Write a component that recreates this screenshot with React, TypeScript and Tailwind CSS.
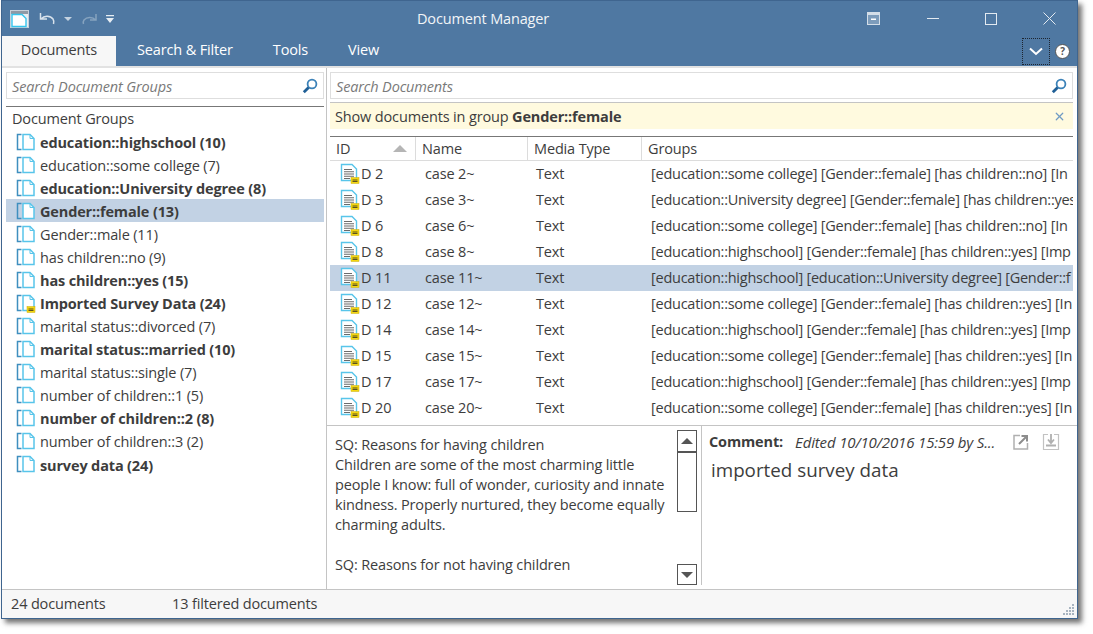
import * as React from 'react';
import { X } from 'lucide-react';

const groups = [
  { label: 'education::highschool (10)', bold: true },
  { label: 'education::some college (7)' },
  { label: 'education::University degree (8)', bold: true },
  { label: 'Gender::female (13)', bold: true, selected: true },
  { label: 'Gender::male (11)' },
  { label: 'has children::no (9)' },
  { label: 'has children::yes (15)', bold: true },
  { label: 'Imported Survey Data (24)', bold: true, commented: true },
  { label: 'marital status::divorced (7)' },
  { label: 'marital status::married (10)', bold: true },
  { label: 'marital status::single (7)' },
  { label: 'number of children::1 (5)' },
  { label: 'number of children::2 (8)', bold: true },
  { label: 'number of children::3 (2)' },
  { label: 'survey data (24)', bold: true },
];

const docs = [
  { id: 'D 2', name: 'case 2~', groups: '[education::some college] [Gender::female] [has children::no] [In' },
  { id: 'D 3', name: 'case 3~', groups: '[education::University degree] [Gender::female] [has children::yes' },
  { id: 'D 6', name: 'case 6~', groups: '[education::some college] [Gender::female] [has children::no] [In' },
  { id: 'D 8', name: 'case 8~', groups: '[education::highschool] [Gender::female] [has children::yes] [Imp' },
  { id: 'D 11', name: 'case 11~', groups: '[education::highschool] [education::University degree] [Gender::f', selected: true },
  { id: 'D 12', name: 'case 12~', groups: '[education::some college] [Gender::female] [has children::yes] [In' },
  { id: 'D 14', name: 'case 14~', groups: '[education::highschool] [Gender::female] [has children::yes] [Imp' },
  { id: 'D 15', name: 'case 15~', groups: '[education::some college] [Gender::female] [has children::yes] [In' },
  { id: 'D 17', name: 'case 17~', groups: '[education::highschool] [Gender::female] [has children::yes] [Imp' },
  { id: 'D 20', name: 'case 20~', groups: '[education::some college] [Gender::female] [has children::yes] [In' },
];

function Note({ x, y }: { x: number; y: number }) {
  return (
    <g>
      <rect x={x} y={y} width="8" height="6" fill="#f5d80f" stroke="#c9ad10" strokeWidth="0.5" />
      <path d={`M${x + 1.5} ${y + 2.5}h5M${x + 1.5} ${y + 4}h5`} stroke="#4a4320" strokeWidth="0.9" />
    </g>
  );
}

function GroupIcon({ commented }: { commented?: boolean }) {
  return (
    <svg width="20" height="20" viewBox="0 0 20 20" className="shrink-0" fill="none">
      <path d="M5.5 2.5H1.5V17.5H5.5" stroke="#3f8fbf" strokeWidth="1.5" />
      <path d="M7 2.5H14L18 6.5V17.5H7Z" fill="#fff" stroke="#58c5ea" strokeWidth="1.5" />
      <path d="M14 2.5V6.5H18" stroke="#58c5ea" strokeWidth="1" />
      {commented && <Note x={11} y={13.5} />}
    </svg>
  );
}

function DocIcon() {
  return (
    <svg width="20" height="22" viewBox="0 0 20 22" className="shrink-0" fill="none">
      <path d="M1.5 1.5H12L16.5 6V17.5H1.5Z" fill="#fff" stroke="#58c5ea" strokeWidth="1.4" />
      <path d="M4 6.5H12M4 8.8H14M4 11H14M4 13.3H14M4 15.5H10" stroke="#6b6b6b" strokeWidth="1.1" />
      <Note x={11} y={14.5} />
    </svg>
  );
}

function SearchIcon() {
  return (
    <svg width="16" height="16" viewBox="0 0 16 16" fill="none">
      <circle cx="10" cy="6" r="4.4" stroke="#3c82b8" strokeWidth="1.8" />
      <path d="M6.6 9.4L1.8 14.2" stroke="#1f5f96" strokeWidth="2.8" />
    </svg>
  );
}

function SearchBox({ placeholder, className }: { placeholder: string; className: string }) {
  return (
    <div className={`flex h-[27px] items-center justify-between border border-[#dedede] bg-white pl-[5px] pr-[5px] ${className}`}>
      <span className="pt-[2px] italic text-[#7a7a7a]">{placeholder}</span>
      <SearchIcon />
    </div>
  );
}

export default function App() {
  return (
    <div className="h-screen w-screen overflow-hidden bg-white pb-[15px] pl-px pr-[15px] font-['Open_Sans',sans-serif] text-[14.5px] tracking-[-0.15px] text-[#3d3d3d]">
      <div className="flex h-full flex-col border border-[#3f658f] bg-white shadow-[4px_4px_5px_rgba(70,70,70,0.75)]">
        {/* Title bar */}
        <header className="relative flex h-[35px] shrink-0 items-center bg-[#4f78a2] text-white">
          <div className="flex items-center pl-[8px]">
            <svg width="19" height="18" viewBox="0 0 19 18" fill="none">
              <rect x="0.5" y="0.5" width="18" height="17" fill="#e9eef3" stroke="#c6d0da" />
              <rect x="1" y="1" width="17" height="3" fill="#8f99a5" />
              <path d="M2 4.5H12L16 8.5V16.5H2Z" fill="#fff" stroke="#35c5ee" strokeWidth="1.4" />
            </svg>
            <svg width="18" height="16" viewBox="0 0 18 16" fill="none" className="ml-[10px]">
              <path d="M1.5 2V8H8M2 8C5 4.5 11 4 14 8C14.8 9.2 15 11 14.5 13" stroke="#d8e2ec" strokeWidth="1.5" />
            </svg>
            <svg width="8" height="5" viewBox="0 0 8 5" className="ml-[7px] mt-[2px]"><path d="M0 0H8L4 4Z" fill="#c4d2e0" /></svg>
            <svg width="18" height="16" viewBox="0 0 18 16" fill="none" className="ml-[8px]">
              <path d="M16 3V9H10M15.5 9C13 6 7 5.500 4 9C3.200 10.200 3 11.500 3.500 13" stroke="#86a3bf" strokeWidth="1.5" />
            </svg>
            <svg width="10" height="10" viewBox="0 0 10 10" className="ml-[7px]"><path d="M1 1H9V2.200H1ZM1 4H9L5 9Z" fill="#e6edf3" /></svg>
          </div>
          <span className="absolute left-[415px] text-[#f2f5f8]">Document Manager</span>
          <div className="ml-auto flex items-center">
            <svg width="13" height="13" viewBox="0 0 13 13" className="mr-[47px]">
              <rect width="13" height="13" fill="#d4dee8" />
              <rect x="1" y="3" width="11" height="9" fill="#7d9cbb" />
              <rect x="4" y="6.500" width="5" height="1.500" fill="#fff" />
            </svg>
            <span className="mr-[46px] h-px w-[12px] bg-[#e3eaf1]" />
            <span className="mr-[46px] h-[12px] w-[12px] border border-[#e3eaf1]" />
            <svg width="13" height="13" viewBox="0 0 13 13" className="mr-[21px]"><path d="M0.500 0.500L12.500 12.500M12.500 0.500L0.500 12.500" stroke="#e3eaf1" /></svg>
          </div>
        </header>

        {/* Ribbon tabs */}
        <nav className="flex h-[30px] shrink-0 items-stretch bg-[#4f78a2] pl-0 text-white">
          <div className="flex w-[114px] items-center justify-center bg-[#f7f7f7] pb-[2px] text-[#3d3d3d]">Documents</div>
          <div className="ml-[21px] flex items-center pb-[2px]">Search &amp; Filter</div>
          <div className="ml-[40px] flex items-center pb-[2px]">Tools</div>
          <div className="ml-[40px] flex items-center pb-[2px]">View</div>
          <div className="ml-auto flex items-center pr-[7px]">
            <div className="flex h-[27px] w-[28px] items-center justify-center border border-dotted border-[#1d2530]">
              <svg width="14" height="9" viewBox="0 0 14 9" fill="none"><path d="M1 1.500L7 7L13 1.500" stroke="#fff" strokeWidth="2" /></svg>
            </div>
            <div className="ml-[5px] flex h-[15px] w-[15px] items-center justify-center rounded-full border border-[#555] bg-white text-[10px] font-bold leading-none text-[#555]">?</div>
          </div>
        </nav>

        <main className="flex min-h-0 flex-1 border-t-2 border-[#e2e2e2]">
          {/* Groups panel */}
          <section className="flex w-[325px] shrink-0 flex-col border-r border-[#c4c4c4] pt-[4px]">
            <SearchBox placeholder="Search Document Groups" className="ml-[4px] mr-[2px]" />
            <div className="ml-[4px] mr-[2px] mt-[7px] flex h-[24px] items-center border-t border-[#777] pl-[6px]">Document Groups</div>
            <ul className="ml-[4px] mr-[2px]">
              {groups.map((g) => (
                <li key={g.label} className={`flex h-[23.07px] items-center gap-[4px] pl-[10px] ${g.selected ? 'bg-[#c2d2e4]' : ''} ${g.bold ? 'font-bold' : ''}`}>
                  <GroupIcon commented={g.commented} />
                  <span className="whitespace-nowrap pt-[2px]">{g.label}</span>
                </li>
              ))}
            </ul>
          </section>

          {/* Documents panel */}
          <section className="flex min-w-0 flex-1 flex-col pt-[4px]">
            <SearchBox placeholder="Search Documents" className="ml-[3px] mr-[4px]" />
            <div className="ml-[3px] mr-[4px] mt-[3px] flex h-[27px] items-center justify-between border-t border-[#c4c4c4] bg-[#fffadf] pl-[5px] pr-[7px]">
              <span className="pt-[2px]">Show documents in group <b>Gender::female</b></span>
              <X size={13} strokeWidth={2.2} className="text-[#6f9bc4]" />
            </div>
            <div className="ml-[3px] mr-[4px] mt-[7px] flex h-[24px] items-center border-t border-[#777]">
              <div className="flex h-full w-[86px] items-center justify-between border-r border-[#dcdcdc] pl-[6px] pr-[8px]">
                ID
                <svg width="14" height="7" viewBox="0 0 14 7"><path d="M0 7L7 0L14 7Z" fill="#b5b5b5" /></svg>
              </div>
              <div className="flex h-full w-[112px] items-center border-r border-[#dcdcdc] pl-[6px]">Name</div>
              <div className="flex h-full w-[114px] items-center border-r border-[#dcdcdc] pl-[6px]">Media Type</div>
              <div className="pl-[6px]">Groups</div>
            </div>
            <div className="ml-[3px] mr-[4px] h-[265px] overflow-hidden border-t border-[#dcdcdc]">
              {docs.map((d) => (
                <div key={d.id} className={`flex h-[26px] items-center whitespace-nowrap ${d.selected ? 'bg-[#c2d2e4]' : ''}`}>
                  <div className="flex w-[86px] shrink-0 items-center pl-[10px]">
                    <DocIcon />
                    <span className="ml-[1px]">{d.id}</span>
                  </div>
                  <div className="w-[112px] shrink-0 pl-[9px]">{d.name}</div>
                  <div className="w-[114px] shrink-0 pl-[8px]">Text</div>
                  <div className="min-w-0 flex-1 overflow-hidden pl-[9px] tracking-[-0.25px]">{d.groups}</div>
                </div>
              ))}
            </div>

            {/* Preview and comment */}
            <div className="flex min-h-0 flex-1 border-t border-[#c4c4c4] pb-[4px]">
              <div className="w-[350px] shrink-0 pl-[8px] pr-[6px] pt-[9px] leading-[20px]">
                <p>SQ: Reasons for having children</p>
                <p>Children are some of the most charming little people I know: full of wonder, curiosity and innate kindness. Properly nurtured, they become equally charming adults.</p>
                <p className="mt-[20px]">SQ: Reasons for not having children</p>
              </div>
              <div className="flex w-[20px] shrink-0 flex-col pt-[4px]">
                <div className="flex h-[22px] items-center justify-center border border-[#555]"><svg width="12" height="6" viewBox="0 0 12 6"><path d="M0 6L6 0L12 6Z" fill="#555" /></svg></div>
                <div className="h-[60px] border border-[#555]" />
                <div className="mt-auto flex h-[21px] items-center justify-center border border-[#555]"><svg width="12" height="6" viewBox="0 0 12 6"><path d="M0 0L6 6L12 0Z" fill="#555" /></svg></div>
              </div>
              <div className="ml-[4px] flex min-w-0 flex-1 flex-col border-l border-[#c4c4c4] pl-[7px] pt-[5px]">
                <div className="flex items-center">
                  <b>Comment:</b>
                  <i className="ml-[12px] whitespace-nowrap text-[15px]">Edited 10/10/2016 15:59 by S...</i>
                  <svg width="18" height="18" viewBox="0 0 18 18" fill="none" className="ml-[17px]">
                    <path d="M8 2.500H2V16H15.500V10" stroke="#b0b0b0" strokeWidth="1.500" />
                    <path d="M7 11L14 4M9.500 3H15V8.500" stroke="#8d8d8d" strokeWidth="2" />
                  </svg>
                  <svg width="18" height="18" viewBox="0 0 18 18" fill="none" className="ml-[12px]">
                    <path d="M6 1.500H1.500V16.500H16.500V1.500H12" stroke="#c2c2c2" strokeWidth="1.200" />
                    <path d="M9 1V9M6 6.500L9 10L12 6.500M4 12.500H14" stroke="#b0b0b0" strokeWidth="1.800" />
                  </svg>
                </div>
                <p className="ml-[2px] mt-[2px] text-[18.8px] tracking-normal">imported survey data</p>
              </div>
            </div>
          </section>
        </main>

        {/* Status bar */}
        <footer className="relative flex h-[29px] shrink-0 items-center border-t border-[#c4c4c4] bg-[#f7f7f7] pl-[9px]">
          <span className="w-[161px]">24 documents</span>
          <span>13 filtered documents</span>
          <svg width="13" height="13" viewBox="0 0 13 13" className="absolute bottom-[2px] right-[2px]" fill="#a8b4c0">
            <path d="M10 1h2v2h-2zM10 4h2v2h-2zM7 4h2v2H7zM10 7h2v2h-2zM7 7h2v2H7zM4 7h2v2H4zM10 10h2v2h-2zM7 10h2v2H7zM4 10h2v2H4zM1 10h2v2H1z" />
          </svg>
        </footer>
      </div>
    </div>
  );
}
